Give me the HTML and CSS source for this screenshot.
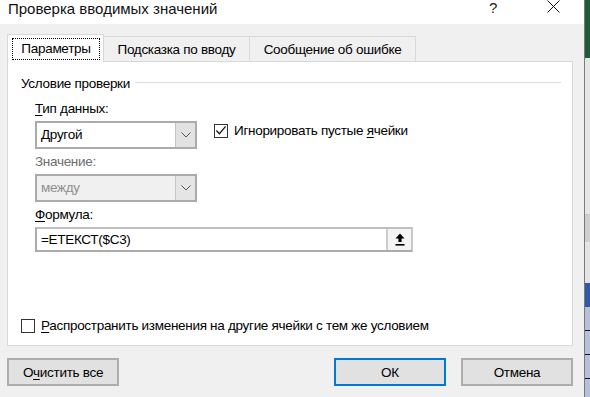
FILE: index.html
```html
<!DOCTYPE html>
<html lang="ru">
<head>
<meta charset="utf-8">
<title>Проверка вводимых значений</title>
<link rel="stylesheet" href="styles.css">
</head>
<body>
<div class="screen">
  <div class="dialog">
    <div class="titlebar">
      <span class="title">Проверка вводимых значений</span>
      <span class="help">?</span>
      <span class="close">
        <svg width="13" height="13" viewBox="0 0 13 13"><path d="M0.5 0.5 L12.5 12.5 M12.5 0.5 L0.5 12.5" stroke="#111" stroke-width="1" fill="none"/></svg>
      </span>
    </div>
    <div class="body">
      <div class="tabs">
        <div class="tab active"><span class="focus">Параметры</span></div>
        <div class="tab t2">Подсказка по вводу</div>
        <div class="tab t3">Сообщение об ошибке</div>
      </div>
      <div class="panel">
        <div class="group-head"><span>Условие проверки</span><span class="rule"></span></div>
        <div class="fields">
          <div class="row">
            <div class="field">
              <div class="label"><u>Т</u>ип данных:</div>
              <div class="combo">
                <span class="combo-text">Другой</span>
                <span class="combo-btn"><svg width="10" height="6" viewBox="0 0 10 6"><path d="M0.5 0.5 L5 5 L9.5 0.5" stroke="#555" stroke-width="1" fill="none"/></svg></span>
              </div>
            </div>
            <div class="check-line ignore">
              <span class="checkbox"><svg width="13" height="11" viewBox="0 0 13 11"><path d="M1.5 5.5 L4.8 9 L11.5 1" stroke="#111" stroke-width="1.3" fill="none"/></svg></span>
              <span>Игнорировать пустые <u>я</u>чейки</span>
            </div>
          </div>
          <div class="field">
            <div class="label disabled">Значение:</div>
            <div class="combo combo-disabled">
              <span class="combo-text">между</span>
              <span class="combo-btn"><svg width="10" height="6" viewBox="0 0 10 6"><path d="M0.5 0.5 L5 5 L9.5 0.5" stroke="#555" stroke-width="1" fill="none"/></svg></span>
            </div>
          </div>
          <div class="field">
            <div class="label"><u>Ф</u>ормула:</div>
            <div class="formula">
              <span class="formula-text">=ЕТЕКСТ($C3)</span>
              <span class="ref-btn"><svg width="10" height="13" viewBox="0 0 10 13"><path d="M5 0.5 L9.5 5.5 L6.6 5.5 L6.6 9 L3.4 9 L3.4 5.5 L0.5 5.5 Z" fill="#000"/><rect x="0.5" y="11" width="9" height="1.6" fill="#000"/></svg></span>
            </div>
          </div>
        </div>
        <div class="check-line spread">
          <span class="checkbox"></span>
          <span><u>Р</u>аспространить изменения на другие ячейки с тем же условием</span>
        </div>
      </div>
      <div class="buttons">
        <div class="btn">О<u>ч</u>истить все</div>
        <div class="btn-right">
          <div class="btn default">ОК</div>
          <div class="btn">Отмена</div>
        </div>
      </div>
    </div>
  </div>
  <div class="excel-strip">
    <div class="xs-green"></div>
    <div class="xs-light"></div>
    <div class="xs-mid"></div>
    <div class="xs-light2"></div>
    <div class="xs-blue"></div>
    <div class="xs-cell"></div>
    <div class="xs-cell"></div>
    <div class="xs-cell"></div>
    <div class="xs-cell last"></div>
  </div>
</div>
</body>
</html>
```

FILE: styles.css
```css
* { box-sizing: border-box; }
html, body { margin: 0; padding: 0; }
body {
  width: 590px;
  height: 397px;
  overflow: hidden;
  font-family: "Liberation Sans", Arial, sans-serif;
  font-size: 13.5px;
  letter-spacing: -0.3px;
  color: #000;
  background: #f0f0f0;
}
u { text-decoration: underline; text-underline-offset: 2px; text-decoration-thickness: 1px; }

.screen { display: flex; width: 590px; height: 397px; }

.dialog {
  width: 584px;
  height: 397px;
  display: flex;
  flex-direction: column;
  background: #f0f0f0;
}

.titlebar {
  height: 24px;
  background: #fff;
  display: flex;
  align-items: flex-start;
  padding-left: 8px;
  flex: none;
}
.title {
  font-size: 15px;
  line-height: 17px;
  letter-spacing: 0;
  color: #111;
}
.help {
  margin-left: auto;
  font-size: 15px;
  line-height: 16px;
  color: #222;
}
.close {
  margin-left: 50px;
  margin-right: 24px;
  display: flex;
}

.body {
  flex: 1;
  display: flex;
  flex-direction: column;
  padding: 10px 11px 10px 7px;
}

.tabs {
  display: flex;
  align-items: flex-end;
  height: 27px;
  flex: none;
  position: relative;
  z-index: 1;
}
.tab {
  height: 25px;
  border: 1px solid #d9d9d9;
  border-bottom: none;
  border-left: none;
  background: #f0f0f0;
  display: flex;
  align-items: center;
  justify-content: center;
  white-space: nowrap;
}
.t2 { width: 146px; }
.t3 { width: 166px; }
.tab.active {
  height: 28px;
  margin-bottom: -1px;
  width: 97px;
  background: #fff;
  border-left: 1px solid #d9d9d9;
  padding: 0 3px 3px 4px;
}
.focus {
  display: flex;
  align-items: center;
  justify-content: center;
  width: 89px;
  height: 22px;
  outline: 1px dotted #000;
  outline-offset: -1px;
  margin-top: 3px;
}

.panel {
  height: 285px;
  width: 566px;
  background: #fff;
  border: 1px solid #d9d9d9;
  display: flex;
  flex-direction: column;
  padding: 10px 11px 0 13px;
  flex: none;
}

.group-head {
  display: flex;
  align-items: center;
  gap: 5px;
  height: 22px;
}
.rule { flex: 1; height: 1px; background: #dcdcdc; margin-top: -2px; }

.fields {
  padding-left: 14px;
  display: flex;
  flex-direction: column;
  margin-top: 4px;
}
.row { display: flex; align-items: flex-start; }
.field { display: flex; flex-direction: column; }
.label { height: 23px; line-height: 22px; }
.label.disabled { color: #6d6d6d; }

.combo {
  width: 162px;
  height: 28px;
  border: 2px solid #ababab;
  display: flex;
  background: #fff;
  margin-bottom: 2px;
}
.combo-text { flex: 1; padding-left: 4px; line-height: 24px; }
.combo-btn {
  width: 20px;
  background: #e2e2e2;
  border-left: 1px solid #c4c4c4;
  display: flex;
  align-items: center;
  justify-content: center;
}
.combo-disabled { background: #f0f0f0; color: #8f8f8f; }
.combo-disabled .combo-btn { background: #e5e5e5; }

.check-line { display: flex; align-items: center; gap: 6px; white-space: nowrap; }
.checkbox {
  width: 14px;
  height: 14px;
  border: 1px solid #333;
  display: flex;
  align-items: center;
  justify-content: center;
  background: #fff;
  flex: none;
}
.ignore { margin-left: 17px; margin-top: 25px; }

.formula {
  width: 378px;
  height: 25px;
  border: 2px solid #ababab;
  border-right-color: #c8c8c8;
  border-top-color: #c0c0c0;
  display: flex;
}
.formula-text { flex: 1; padding-left: 4px; line-height: 21px; }
.ref-btn {
  width: 25px;
  background: #f4f4f4;
  border-left: 2px solid #cdcdcd;
  display: flex;
  align-items: center;
  justify-content: center;
}

.spread { margin-top: auto; margin-bottom: 12px; gap: 6px; }

.buttons {
  margin-top: 12px;
  display: flex;
  justify-content: space-between;
  height: 28px;
  flex: none;
}
.btn-right { display: flex; gap: 15px; }
.btn {
  width: 112px;
  height: 28px;
  background: #e1e1e1;
  border: 2px solid #adadad;
  display: flex;
  align-items: center;
  justify-content: center;
}
.btn.default { border-color: #0078d7; }

.excel-strip {
  width: 6px;
  height: 397px;
  display: flex;
  flex-direction: column;
  border-left: 1px solid #7a7a7a;
  flex: none;
}
.xs-green { height: 58px; background: #1f5d3a; }
.xs-light { height: 157px; background: #e6e6e6; border-bottom: 1px solid #c6c6c6; }
.xs-mid { height: 27px; background: #cfcfcf; }
.xs-light2 { height: 41px; background: #e4e4e4; }
.xs-blue { height: 24px; background: #2f5ba6; }
.xs-cell { height: 24px; background: #b7c1d9; border-bottom: 1px solid #111; }
.xs-cell.last { height: 18px; border-bottom: none; }
```
